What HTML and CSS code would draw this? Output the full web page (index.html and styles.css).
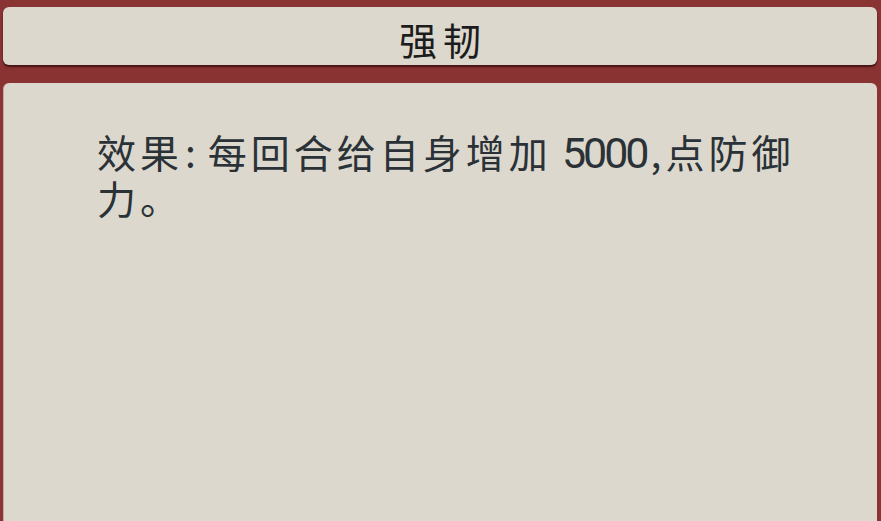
FILE: index.html
```html
<!DOCTYPE html>
<html lang="zh-CN">
<head>
    <meta charset="UTF-8">
    <meta name="viewport" content="width=device-width, initial-scale=1.0">
    <title>强韧</title>
    <link rel="stylesheet" href="styles.css">
</head>
<body>
    <div class="page">
        <div class="title-bar">
            <h1>强韧</h1>
        </div>
        <div class="detail">
            <p class="desc">效果<span class="colon">:</span>每回合给自身增加<span class="num">5000</span><span class="comma">,</span>点防御力。</p>
        </div>
    </div>
</body>
</html>
```

FILE: styles.css
```css
html, body {
    margin: 0;
    padding: 0;
    height: 100%;
    background-color: #8a3333;
    font-family: "Noto Sans CJK SC", "Noto Sans", sans-serif;
    overflow: hidden;
}
.page {
    height: 100%;
    display: flex;
    flex-direction: column;
    gap: 18px;
    padding: 7px 4px 0 3px;
    box-sizing: border-box;
}
.title-bar {
    height: 58px;
    flex-shrink: 0;
    background-color: #dcd8cd;
    border-radius: 6px;
    box-shadow: 0 2px 2px rgba(30, 0, 0, 0.65);
    box-sizing: border-box;
    padding-top: 6px;
    text-align: center;
}
.title-bar h1 {
    margin: 0;
    font-size: 38px;
    font-weight: normal;
    line-height: 52px;
    letter-spacing: 6px;
    padding-left: 6px;
    color: #1c1c1c;
}
.detail {
    flex: 1;
    background-color: #dcd8cd;
    border-radius: 6px 6px 0 0;
    border-left: 1px solid #c9a9a0;
    padding: 46px 70px 0 93px;
}
.desc {
    margin: 0;
    font-size: 39px;
    line-height: 45px;
    letter-spacing: 4px;
    color: #2a3237;
}
.desc .colon {
    margin: 0 8px 0 2px;
}
/* 数字用窄一点的无衬线体 */
.desc .num {
    font-family: Roboto, sans-serif;
    font-size: 43px;
    letter-spacing: -3px;
    margin-left: 10px;
    line-height: 1;
}
.desc .comma {
    letter-spacing: 0;
    margin: 0 4px 0 4px;
}
```
